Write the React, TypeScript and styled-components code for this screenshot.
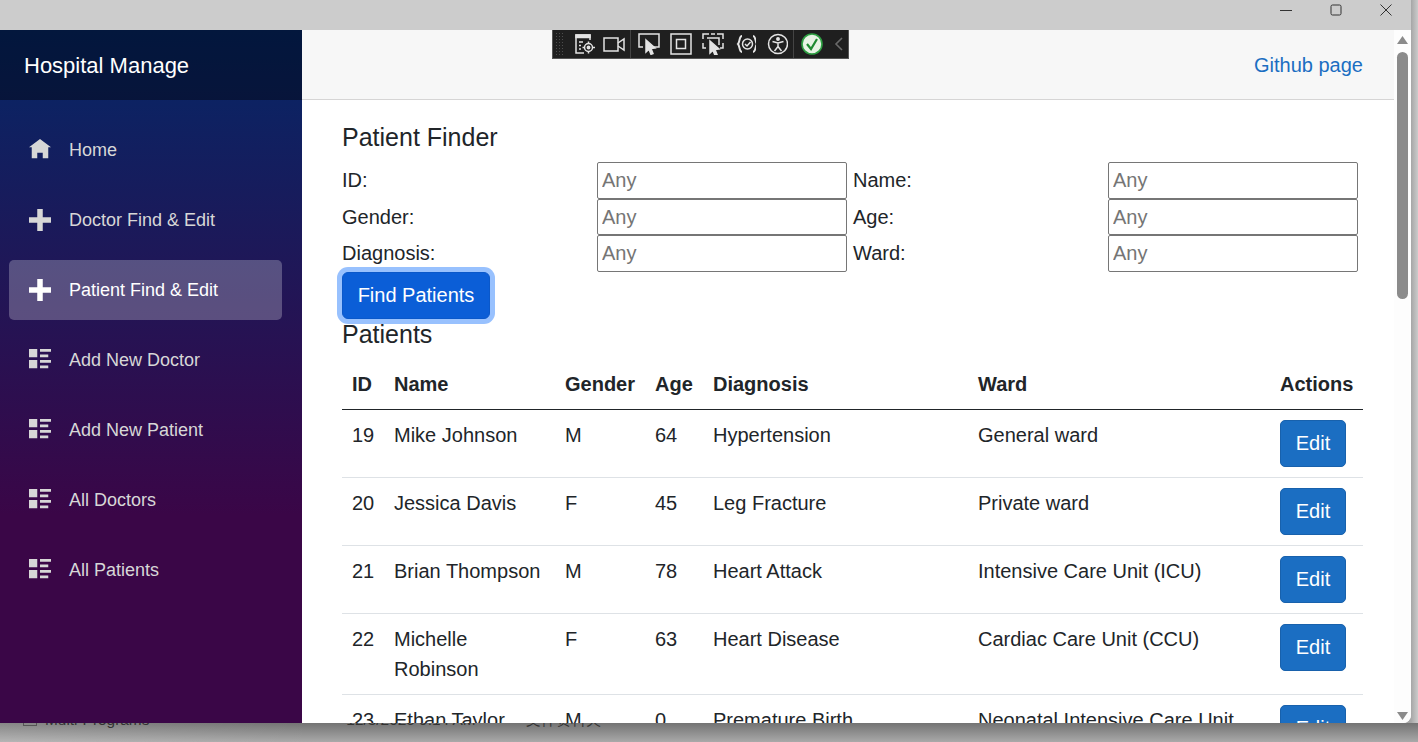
import React from 'react';
import styled, { createGlobalStyle } from 'styled-components';

const GlobalStyle = createGlobalStyle`
    html, body {
        margin: 0;
        padding: 0;
        height: 100%;
        overflow: hidden;
        font-family: "Liberation Sans", Arial, sans-serif;
    }
`;

const Desktop = styled.div`
    width: 1418px;
    height: 742px;
    display: flex;
    flex-direction: column;
    overflow: hidden;
    background: linear-gradient(90deg, #a6a6a6 1411px, #cbcbcb 1418px);
`;

const Window = styled.div`
    width: 1411px;
    height: 723px;
    flex: none;
    display: flex;
    flex-direction: column;
    position: relative;
    border-bottom-right-radius: 8px;
    overflow: hidden;
    background: #fff;
`;

const TitleBar = styled.div`
    height: 30px;
    flex: none;
    background: #cccccc;
    display: flex;
    justify-content: flex-end;
    align-items: flex-start;
`;

const WindowButton = styled.div`
    width: 50px;
    height: 20px;
    display: flex;
    align-items: center;
    justify-content: center;
    color: #333;
`;

const Body = styled.div`
    flex: 1;
    min-height: 0;
    display: flex;
`;

const Sidebar = styled.nav`
    width: 302px;
    flex: none;
    background: linear-gradient(180deg, rgb(5, 39, 103) 0%, #3a0647 70%);
`;

const Brand = styled.div`
    height: 70px;
    box-sizing: border-box;
    display: flex;
    align-items: center;
    padding: 2px 0 0 24px;
    background: rgba(0, 0, 0, 0.4);
    color: #fff;
    font-size: 22px;
`;

const NavList = styled.div`
    display: flex;
    flex-direction: column;
    padding: 20px 20px 0 9px;
`;

const NavItem = styled.a<{ $active?: boolean }>`
    height: 60px;
    margin-bottom: 10px;
    display: flex;
    align-items: center;
    gap: 18px;
    padding-left: 20px;
    border-radius: 5px;
    font-size: 18px;
    color: ${(p) => (p.$active ? '#fff' : '#d7d7d7')};
    background: ${(p) => (p.$active ? 'rgba(255, 255, 255, 0.25)' : 'transparent')};
`;

const NavIcon = styled.svg`
    width: 22px;
    height: 22px;
    flex: none;
    fill: currentColor;
`;

const Main = styled.main`
    flex: 1;
    min-width: 0;
    overflow: hidden;
    position: relative;
    display: flex;
    flex-direction: column;
`;

const TopRow = styled.header`
    height: 70px;
    box-sizing: border-box;
    flex: none;
    display: flex;
    justify-content: flex-end;
    align-items: center;
    padding: 2px 31px 0 0;
    background: #f7f7f7;
    border-bottom: 1px solid #d6d5d5;
`;

const GithubLink = styled.a`
    color: #1b6ec2;
    font-size: 20px;
`;

const Content = styled.div`
    padding: 23px 31px 0 40px;
    color: #212529;
    font-size: 20px;
    line-height: 30px;
`;

const Heading = styled.h3`
    margin: 0;
    font-weight: 400;
    font-size: 25px;
    line-height: 29px;
`;

const FinderGrid = styled.div`
    display: grid;
    grid-template-columns: 255px 250px 6px 255px 250px;
    grid-template-rows: 37px 36px 36.5px;
    margin-top: 10px;
    width: 1016px;
`;

const FieldLabel = styled.label`
    line-height: 36px;
`;

const FieldInput = styled.input`
    width: 250px;
    height: 100%;
    box-sizing: border-box;
    border: 1px solid #767676;
    border-radius: 2px;
    padding: 1px 4px;
    font-family: inherit;
    font-size: 20px;
    color: #212529;
    outline: none;
    background: #fff;
    &::placeholder {
        color: #757575;
        opacity: 1;
    }
`;

const Gap = styled.span``;

const FindButton = styled.button`
    display: block;
    margin: 0;
    width: 148px;
    height: 47px;
    border: 1px solid #0a58ca;
    border-radius: 6px;
    background: #0b5ed7;
    color: #fff;
    font-family: inherit;
    font-size: 20px;
    box-shadow: 0 0 0 5px #98c1fe;
`;

const SectionTitle = styled(Heading)`
    margin-top: 1px;
`;

const Table = styled.table`
    width: 1021px;
    border-collapse: collapse;
    table-layout: fixed;
    margin-top: 10.5px;
`;

const HeadCell = styled.th<{ $width: number }>`
    width: ${(p) => p.$width}px;
    box-sizing: border-box;
    padding: 10px;
    text-align: left;
    font-weight: 700;
    border-bottom: 1px solid #212529;
    white-space: nowrap;
`;

const Cell = styled.td`
    padding: 10px;
    vertical-align: top;
    border-bottom: 1px solid #dee2e6;
`;

const EditButton = styled.button`
    display: block;
    width: 66px;
    height: 47px;
    border: 1px solid #1861ac;
    border-radius: 5px;
    background: #1b6ec2;
    color: #fff;
    font-family: inherit;
    font-size: 20px;
`;

const ScrollTrack = styled.div`
    width: 17px;
    flex: none;
    background: #fdfdfd;
    display: flex;
    flex-direction: column;
    align-items: center;
    justify-content: space-between;
    padding: 6px 0 3px;
    box-sizing: border-box;
    position: relative;
`;

const ScrollThumb = styled.div`
    position: absolute;
    top: 22px;
    left: 3px;
    width: 11px;
    height: 247px;
    border-radius: 6px;
    background: #8b8b8b;
`;

const Arrow = styled.svg`
    width: 11px;
    height: 8px;
    fill: #8b8b8b;
`;

const DevToolbar = styled.div`
    position: absolute;
    top: 0;
    left: 250px;
    width: 297px;
    height: 29px;
    box-sizing: border-box;
    border: 1px solid #555;
    border-top: none;
    background: #1f1f1f;
    display: flex;
    align-items: center;
    color: #e4e4e4;
`;

const ToolGroup = styled.div<{ $gap: number; $last?: boolean }>`
    display: flex;
    align-items: center;
    gap: ${(p) => p.$gap}px;
    height: 100%;
    padding: 0 ${(p) => (p.$last ? 0 : 5)}px 0 7px;
    border-right: ${(p) => (p.$last ? 'none' : '1px solid #444')};
`;

const Grip = styled.div`
    width: 10px;
    height: 24px;
    margin: 0 2px;
    background-image: radial-gradient(#4d4d4d 1px, transparent 1px);
    background-size: 3px 3px;
`;

const ToolIcon = styled.svg`
    width: 22px;
    height: 22px;
    flex: none;
    fill: none;
    stroke: currentColor;
    stroke-width: 1.5;
`;

const Collapse = styled.svg`
    width: 12px;
    height: 14px;
    margin-left: 10px;
    fill: none;
    stroke: #6a6a6a;
    stroke-width: 1.6;
`;

const BehindRow = styled.div`
    flex: 1;
    display: flex;
    color: #333;
    font-size: 15.4px;
    line-height: 18px;
    overflow: hidden;
    background: linear-gradient(90deg, rgba(255, 255, 255, 0.14), transparent 22%), linear-gradient(180deg, #737373, #a9a9a9);
`;

const BehindCheck = styled.span`
    width: 12px;
    height: 14px;
    margin: -13px 0 0 23px;
    border: 1px solid #555;
`;

const BehindText = styled.span<{ $left: number }>`
    margin-left: ${(p) => p.$left}px;
    margin-top: -12px;
    white-space: nowrap;
`;

const HomeGlyph = () => (
    <NavIcon viewBox="0 0 8 8">
        <path d="M4 0L0 3h1v4h2V5h2v2h2V3.03L8 3 4 0z" />
    </NavIcon>
);

const PlusGlyph = () => (
    <NavIcon viewBox="0 0 8 8">
        <path d="M3 0v3H0v2h3v3h2V5h3V3H5V0H3z" />
    </NavIcon>
);

const ListGlyph = () => (
    <NavIcon viewBox="0 0 8 8">
        <path d="M0 0v3h3V0H0zm4 0v1h4V0H4zm0 2v1h3V2H4zM0 4v3h3V4H0zm4 0v1h4V4H4zm0 2v1h3V6H4z" />
    </NavIcon>
);

const navItems = [
    { label: 'Home', icon: <HomeGlyph /> },
    { label: 'Doctor Find & Edit', icon: <PlusGlyph /> },
    { label: 'Patient Find & Edit', icon: <PlusGlyph />, active: true },
    { label: 'Add New Doctor', icon: <ListGlyph /> },
    { label: 'Add New Patient', icon: <ListGlyph /> },
    { label: 'All Doctors', icon: <ListGlyph /> },
    { label: 'All Patients', icon: <ListGlyph /> },
];

const fields = [
    ['ID:', 'Name:'],
    ['Gender:', 'Age:'],
    ['Diagnosis:', 'Ward:'],
];

const columns = [
    { title: 'ID', width: 42 },
    { title: 'Name', width: 171 },
    { title: 'Gender', width: 90 },
    { title: 'Age', width: 58 },
    { title: 'Diagnosis', width: 265 },
    { title: 'Ward', width: 302 },
    { title: 'Actions', width: 93 },
];

const patients = [
    { id: 19, name: 'Mike Johnson', gender: 'M', age: 64, diagnosis: 'Hypertension', ward: 'General ward' },
    { id: 20, name: 'Jessica Davis', gender: 'F', age: 45, diagnosis: 'Leg Fracture', ward: 'Private ward' },
    { id: 21, name: 'Brian Thompson', gender: 'M', age: 78, diagnosis: 'Heart Attack', ward: 'Intensive Care Unit (ICU)' },
    { id: 22, name: 'Michelle Robinson', gender: 'F', age: 63, diagnosis: 'Heart Disease', ward: 'Cardiac Care Unit (CCU)' },
    { id: 23, name: 'Ethan Taylor', gender: 'M', age: 0, diagnosis: 'Premature Birth', ward: 'Neonatal Intensive Care Unit' },
];

function App() {
    return (
        <Desktop>
            <GlobalStyle />
            <Window>
                <TitleBar>
                    <WindowButton>
                        <svg width="12" height="12" viewBox="0 0 12 12" stroke="currentColor" fill="none">
                            <path d="M0 6.5h12" />
                        </svg>
                    </WindowButton>
                    <WindowButton>
                        <svg width="12" height="12" viewBox="0 0 12 12" stroke="currentColor" fill="none">
                            <rect x="1" y="1" width="10" height="10" rx="1.5" />
                        </svg>
                    </WindowButton>
                    <WindowButton>
                        <svg width="12" height="12" viewBox="0 0 12 12" stroke="currentColor" fill="none">
                            <path d="M0.5 0.5l11 11M11.5 0.5l-11 11" />
                        </svg>
                    </WindowButton>
                </TitleBar>
                <Body>
                    <Sidebar>
                        <Brand>Hospital Manage</Brand>
                        <NavList>
                            {navItems.map((item) => (
                                <NavItem key={item.label} $active={item.active}>
                                    {item.icon}
                                    {item.label}
                                </NavItem>
                            ))}
                        </NavList>
                    </Sidebar>
                    <Main>
                        <DevToolbar>
                            <Grip />
                            <ToolGroup $gap={7}>
                                <ToolIcon viewBox="0 0 22 22">
                                    <path d="M16 7V2H2v18h8" />
                                    <path d="M2 2h14v2.5H2z" fill="currentColor" />
                                    <path d="M5 9h4M5 12.5h2M5 16h2" />
                                    <circle cx="14.5" cy="14.5" r="4" />
                                    <circle cx="14.5" cy="14.5" r="1.2" fill="currentColor" />
                                    <path d="M14.5 8.5v2.5M14.5 18v2.5M8.5 14.5H11M18 14.5h3" />
                                </ToolIcon>
                                <ToolIcon viewBox="0 0 22 22">
                                    <rect x="1" y="5" width="14" height="13" />
                                    <path d="M15 10l6-4v11l-6-4" />
                                </ToolIcon>
                            </ToolGroup>
                            <ToolGroup $gap={10}>
                                <ToolIcon viewBox="0 0 22 22">
                                    <path d="M5 14H1V1h20v13h-5" />
                                    <path d="M8 7l9 8-4 .5 2 5-2 .8-2-5-3 2.7z" fill="currentColor" />
                                </ToolIcon>
                                <ToolIcon viewBox="0 0 22 22">
                                    <rect x="1" y="1" width="20" height="20" />
                                    <rect x="6.5" y="6.5" width="9" height="9" />
                                </ToolIcon>
                                <ToolIcon viewBox="0 0 22 22">
                                    <path d="M1 6V1h6M15 1h6v5M1 10v5h3M21 10v5h-3M9 1h4M5 5h12v7" />
                                    <path d="M8 8l9 8-4 .5 2 5-2 .8-2-5-3 2.7z" fill="currentColor" />
                                </ToolIcon>
                                <ToolIcon viewBox="-3 0 22 22">
                                    <path d="M5 3C2 3 3 9 1 11c2 2 1 8 4 8M16 3c3 0 2 6 4 8-2 2-1 8-4 8" strokeWidth="2" />
                                    <circle cx="10.5" cy="11" r="5" />
                                    <path d="M8 11l2 2 3.5-4" />
                                </ToolIcon>
                                <ToolIcon viewBox="-1 0 22 22">
                                    <circle cx="11" cy="11" r="9.5" />
                                    <circle cx="11" cy="6" r="1.2" fill="currentColor" />
                                    <path d="M5.5 8.5L11 10l5.5-1.5M11 10v3.5M7.5 18l3.5-4.5 3.5 4.5" />
                                </ToolIcon>
                            </ToolGroup>
                            <ToolGroup $gap={0} $last>
                                <ToolIcon viewBox="0 0 22 22">
                                    <circle cx="11" cy="11" r="10" fill="#e8f3e4" stroke="#2ea043" strokeWidth="1.6" />
                                    <path d="M6 11l4 5 6-10" stroke="#1f8a30" strokeWidth="2.2" />
                                </ToolIcon>
                            </ToolGroup>
                            <Collapse viewBox="0 0 12 14">
                                <path d="M9 1L3 7l6 6" />
                            </Collapse>
                        </DevToolbar>
                        <TopRow>
                            <GithubLink>Github page</GithubLink>
                        </TopRow>
                        <Content>
                            <Heading>Patient Finder</Heading>
                            <FinderGrid>
                                {fields.map(([left, right]) => (
                                    <React.Fragment key={left}>
                                        <FieldLabel>{left}</FieldLabel>
                                        <FieldInput placeholder="Any" />
                                        <Gap />
                                        <FieldLabel>{right}</FieldLabel>
                                        <FieldInput placeholder="Any" />
                                    </React.Fragment>
                                ))}
                            </FinderGrid>
                            <FindButton>Find Patients</FindButton>
                            <SectionTitle>Patients</SectionTitle>
                            <Table>
                                <thead>
                                    <tr>
                                        {columns.map((c) => (
                                            <HeadCell key={c.title} $width={c.width}>
                                                {c.title}
                                            </HeadCell>
                                        ))}
                                    </tr>
                                </thead>
                                <tbody>
                                    {patients.map((p) => (
                                        <tr key={p.id}>
                                            <Cell>{p.id}</Cell>
                                            <Cell>{p.name}</Cell>
                                            <Cell>{p.gender}</Cell>
                                            <Cell>{p.age}</Cell>
                                            <Cell>{p.diagnosis}</Cell>
                                            <Cell>{p.ward}</Cell>
                                            <Cell>
                                                <EditButton>Edit</EditButton>
                                            </Cell>
                                        </tr>
                                    ))}
                                </tbody>
                            </Table>
                        </Content>
                    </Main>
                    <ScrollTrack>
                        <Arrow viewBox="0 0 11 8">
                            <path d="M5.5 0L11 8H0z" />
                        </Arrow>
                        <ScrollThumb />
                        <Arrow viewBox="0 0 11 8">
                            <path d="M5.5 8L0 0h11z" />
                        </Arrow>
                    </ScrollTrack>
                </Body>
            </Window>
            <BehindRow>
                <BehindCheck />
                <BehindText $left={8}>Multi-Programs</BehindText>
                <BehindText $left={197}>12/3/2025 9:14 AM</BehindText>
                <BehindText $left={50}>文件资料夹</BehindText>
            </BehindRow>
        </Desktop>
    );
}

export default App;
